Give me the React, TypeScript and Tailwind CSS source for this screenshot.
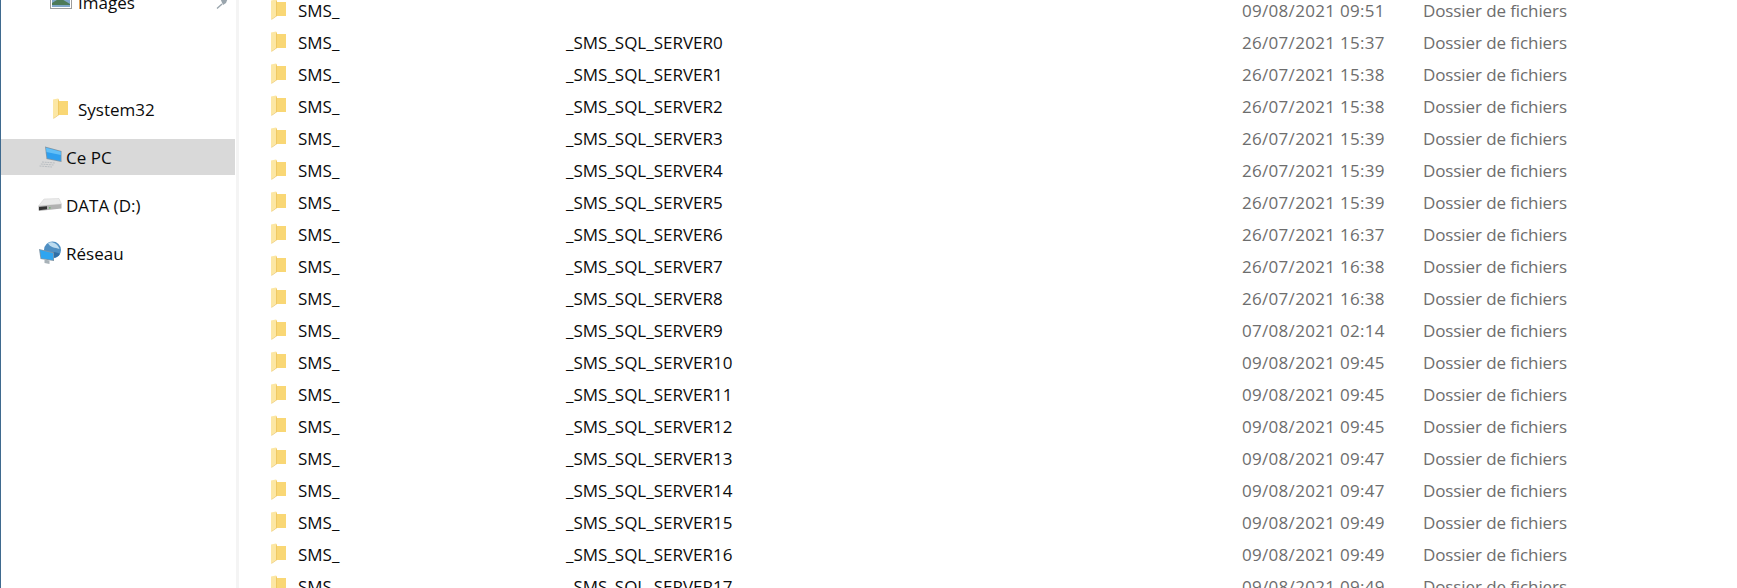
const rows = [
  { name: "", date: "09/08/2021 09:51" },
  { name: "_SMS_SQL_SERVER0", date: "26/07/2021 15:37" },
  { name: "_SMS_SQL_SERVER1", date: "26/07/2021 15:38" },
  { name: "_SMS_SQL_SERVER2", date: "26/07/2021 15:38" },
  { name: "_SMS_SQL_SERVER3", date: "26/07/2021 15:39" },
  { name: "_SMS_SQL_SERVER4", date: "26/07/2021 15:39" },
  { name: "_SMS_SQL_SERVER5", date: "26/07/2021 15:39" },
  { name: "_SMS_SQL_SERVER6", date: "26/07/2021 16:37" },
  { name: "_SMS_SQL_SERVER7", date: "26/07/2021 16:38" },
  { name: "_SMS_SQL_SERVER8", date: "26/07/2021 16:38" },
  { name: "_SMS_SQL_SERVER9", date: "07/08/2021 02:14" },
  { name: "_SMS_SQL_SERVER10", date: "09/08/2021 09:45" },
  { name: "_SMS_SQL_SERVER11", date: "09/08/2021 09:45" },
  { name: "_SMS_SQL_SERVER12", date: "09/08/2021 09:45" },
  { name: "_SMS_SQL_SERVER13", date: "09/08/2021 09:47" },
  { name: "_SMS_SQL_SERVER14", date: "09/08/2021 09:47" },
  { name: "_SMS_SQL_SERVER15", date: "09/08/2021 09:49" },
  { name: "_SMS_SQL_SERVER16", date: "09/08/2021 09:49" },
  { name: "_SMS_SQL_SERVER17", date: "09/08/2021 09:49" },
]

const Folder = () => (
  <svg width="15" height="21" viewBox="0 0 15 21" className="mb-[3px] shrink-0">
    <path d="M5 0.5 L6 3 L15 3 L15 17 L5 17 Z" fill="#f9d775" />
    <path d="M0 1.5 L5 0.5 L5 17 L0 20.5 Z" fill="#fce7a4" />
    <path d="M5 0.5 L6 3 L6 17 L5 17 Z" fill="#efc964" />
    <path d="M0 20.5 L5 17 L6 17 L1 20.5 Z" fill="#e9c15c" />
  </svg>
)

const PcIcon = () => (
  <svg width="24" height="22" viewBox="0 0 24 22" className="shrink-0">
    <path d="M7 0.5 L23.5 5 L23.5 16 L8.5 13 Z" fill="#7f97a8" />
    <path d="M8 1.8 L22.8 5.8 L22.8 15 L9.2 12.3 Z" fill="#2f9fee" />
    <path d="M8 1.8 L22.8 5.8 L22.8 9 L8.5 6 Z" fill="#63bff6" />
    <path d="M4 16 L17 17 M2.8 18 L15.5 19 M1.5 20 L14 21" stroke="#b9bec2" strokeWidth="1" strokeDasharray="2 0.7" fill="none" />
  </svg>
)

const DriveIcon = () => (
  <svg width="24" height="14" viewBox="0 0 24 14" className="shrink-0">
    <path d="M6 1 L21 0.5 L23.5 6 L0.5 8 Z" fill="#ebebeb" stroke="#cfcfcf" strokeWidth="0.5" />
    <path d="M0.5 8 L23.5 6 L23.5 10.5 L1 13 L0.5 12 Z" fill="#b2b2b2" />
    <path d="M1 9 L9 8.2 L9 11.2 L1 12.2 Z" fill="#333" />
    <path d="M11 9.3 L12.5 9.2 L12.5 10.5 L11 10.6 Z" fill="#5fb05f" />
  </svg>
)

const NetworkIcon = () => (
  <svg width="24" height="24" viewBox="0 0 24 24" className="shrink-0">
    <circle cx="14.5" cy="9" r="8.5" fill="#4f8fc2" />
    <path d="M10 2 C14 0 20 3 21.5 8 C17 6.5 12 6.5 10 2 Z" fill="#bcdcf0" />
    <path d="M15 11 C18 11 21 12 22 13 C20 16 17 17 15 16 Z" fill="#2f6ea5" />
    <path d="M1 8 L16 11.5 L16 20 L2.5 18 Z" fill="#7f97a8" />
    <path d="M2 9 L15.2 12.2 L15.2 19 L3.2 17.2 Z" fill="#2fa5f0" />
    <path d="M6.5 18.5 L11.5 19.5 L11.5 23 L6.5 22 Z" fill="#a8b2b8" />
  </svg>
)

const ImageIcon = () => (
  <svg width="22" height="9" viewBox="0 0 22 9" className="shrink-0">
    <rect x="0.5" y="-8" width="21" height="16.5" fill="#fff" stroke="#9d9d9d" />
    <rect x="2" y="-6" width="18" height="13" fill="#7fa6c8" />
    <path d="M2 3 L10 -2 L20 4 L20 5 L2 5 Z" fill="#4d7a58" />
  </svg>
)

const PinIcon = () => (
  <svg width="14" height="9" viewBox="0 0 14 9" className="shrink-0">
    <path d="M4 -2 L12 -2 L10 3 L7 5 Z" fill="#9aa5ad" />
    <path d="M6 4 L1 8.5" stroke="#9aa5ad" strokeWidth="1.4" />
  </svg>
)

export default function App() {
  return (
    <div className="flex h-[588px] w-[1737px] overflow-hidden bg-white font-['Open_Sans','Noto_Sans',sans-serif] text-[#0b0b0b]">
      <div className="w-[1px] shrink-0 bg-[#3f6a8f]" />
      <aside className="w-[234px] shrink-0 text-[17px]">
        <div className="-mt-[14px] flex h-9 items-center pl-[49px] pr-[5px]">
          <ImageIcon />
          <span className="mb-[2px] ml-[6px]">Images</span>
          <span className="ml-auto"><PinIcon /></span>
        </div>
        <div className="mt-[70px] flex h-9 items-center gap-[8px] pl-[52px]">
          <Folder />
          <span className="ml-[2px]">System32</span>
        </div>
        <div className="mt-[11px] flex h-9 items-center gap-[4px] bg-[#d9d9d9] pl-[37px]">
          <PcIcon />
          <span className="mt-[2px]">Ce PC</span>
        </div>
        <div className="mt-3 flex h-9 items-center gap-[4px] pl-[37px]">
          <DriveIcon />
          <span className="mt-[2px]">DATA (D:)</span>
        </div>
        <div className="mt-3 flex h-9 items-center gap-[4px] pl-[37px]">
          <NetworkIcon />
          <span className="mt-[2px]">Réseau</span>
        </div>
      </aside>
      <div className="ml-[1px] w-[3px] shrink-0 bg-[#f4f4f4]" />
      <main className="-mt-[5px] min-w-0 flex-1 text-[17px]">
        {rows.map((r, i) => (
          <div key={i} className="flex h-8 items-center whitespace-nowrap pl-[32px]">
            <Folder />
            <span className="ml-[12px] w-[268px]">SMS_</span>
            <span className="w-[676px]">{r.name}</span>
            <span className="w-[181px] tracking-[0.3px] text-[#6d6d6d]">{r.date}</span>
            <span className="tracking-[-0.1px] text-[#6d6d6d]">Dossier de fichiers</span>
          </div>
        ))}
      </main>
    </div>
  )
}
